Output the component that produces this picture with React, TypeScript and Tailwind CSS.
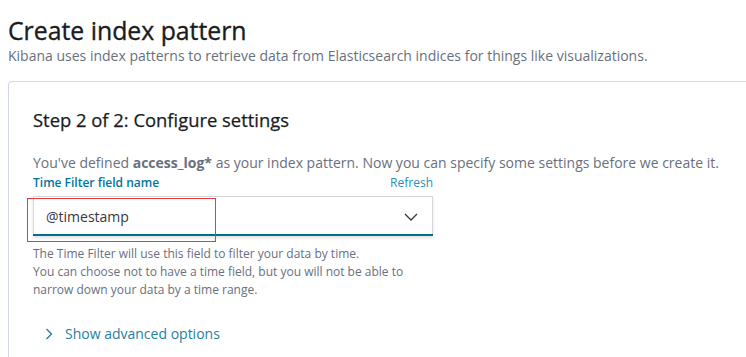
import React from "react";

export default function App() {
  return (
    <div className="w-[746px] h-[357px] overflow-hidden bg-white" style={{ fontFamily: '"Open Sans", sans-serif' }}>
      <div className="pl-[8px] pt-[14px]">
        <h1 className="text-[24.8px] leading-[32px] text-[#1a1c21] font-normal [-webkit-text-stroke:0.35px_#1a1c21]">Create index pattern</h1>
        <p className="text-[14px] leading-[20px] text-[#69707d] mt-[0px]">
          Kibana uses index patterns to retrieve data from Elasticsearch indices for things like visualizations.
        </p>
        <div className="mt-[15px] border border-[#d3dae6] rounded-tl-[4px] border-r-0 h-[300px] pl-[24px] pt-[24px]">
          <h2 className="text-[18.4px] leading-[28px] text-[#1a1c21] font-normal [-webkit-text-stroke:0.25px_#1a1c21]">Step 2 of 2: Configure settings</h2>
          <p className="mt-[19px] text-[14px] leading-[20px] text-[#69707d]">
            You've defined <b className="font-bold text-[#69707d]">access_log*</b> as your index pattern. Now you can specify some settings before we create it.
          </p>
          <div className="w-[400px]">
            <div className="flex justify-between items-end h-[18px] mt-[1px]">
              <span className="text-[12px] font-semibold text-[#00779a]">Time Filter field name</span>
              <span className="text-[12px] text-[#2a8fb0]">Refresh</span>
            </div>
            <div className="relative mt-[4px]">
              <div className="h-[40px] bg-white border border-[#d7d7d7] border-b-0 shadow-[0_2px_3px_rgba(0,0,0,0.12)] flex items-center justify-between pl-[12px] pr-[12px] relative">
                <span className="text-[14px] text-[#343741]">@timestamp</span>
                <svg width="14" height="8" viewBox="0 0 14 8" className="mr-[2px]">
                  <path d="M1 1 L7 7 L13 1" fill="none" stroke="#343741" strokeWidth="1.3" />
                </svg>
                <div className="absolute left-[-1px] right-[-1px] bottom-0 h-[2px] bg-[#00708f]" />
              </div>
              <div className="absolute left-[-6px] top-[2px] w-[189px] h-[44px] border border-[#e8393f] pointer-events-none" />
            </div>
            <div className="mt-[9px] text-[12px] leading-[18px] text-[#69707d]">
              <div>The Time Filter will use this field to filter your data by time.</div>
              <div>You can choose not to have a time field, but you will not be able to</div>
              <div>narrow down your data by a time range.</div>
            </div>
          </div>
          <div className="mt-[24px] flex items-center text-[14px] text-[#1f7fa0] pl-[12px]">
            <svg width="8" height="12" viewBox="0 0 8 12" className="mr-[12px]">
              <path d="M1.5 1 L6.5 6 L1.5 11" fill="none" stroke="#1f7fa0" strokeWidth="1.3" />
            </svg>
            <span>Show advanced options</span>
          </div>
        </div>
      </div>
    </div>
  );
}
